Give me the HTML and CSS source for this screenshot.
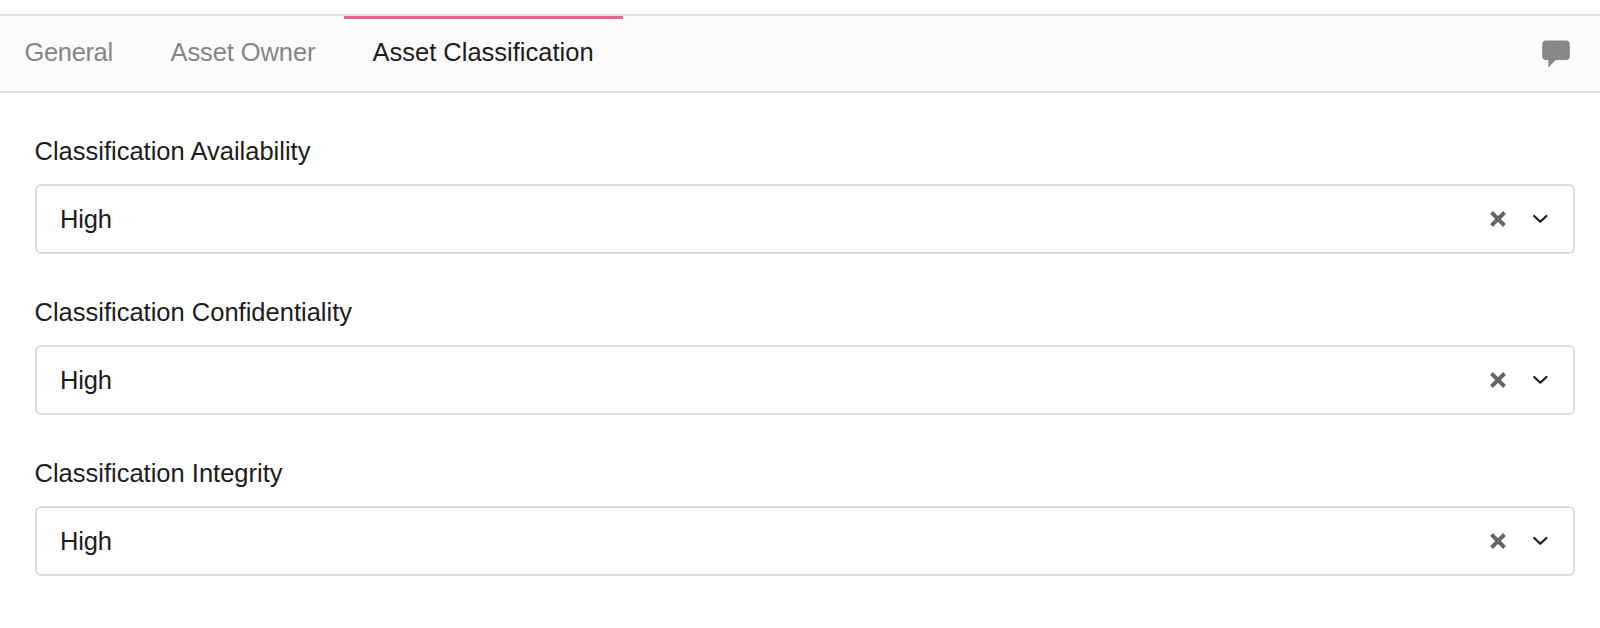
FILE: index.html
```html
<!DOCTYPE html>
<html lang="en">

<head>
  <meta charset="UTF-8">
  <meta name="viewport" content="width=device-width, initial-scale=1.0">
  <title>Asset Classification</title>
  <link rel="stylesheet" href="styles.css">
</head>

<body>
  <svg class="symbols" width="0" height="0">
    <symbol id="icon-clear" viewBox="0 0 18 18">
      <path d="M2.500 2.500l13 13M15.500 2.500l-13 13" fill="none" stroke="currentColor" stroke-width="4" />
    </symbol>
    <symbol id="icon-arrow" viewBox="0 0 16 10">
      <path d="M2.200 2L8.300 7.700 14.400 2" fill="none" stroke="currentColor" stroke-width="2.200" stroke-linecap="round" stroke-linejoin="round" />
    </symbol>
  </svg>

  <nav class="tabs">
    <a class="tab tab-general">General</a>
    <a class="tab tab-owner">Asset Owner</a>
    <a class="tab tab-class active">Asset Classification</a>
    <svg class="comment" width="28" height="28" viewBox="0 0 28 28">
      <path d="M4 .500h20a3.800 3.800 0 0 1 3.800 3.800v12a3.800 3.800 0 0 1-3.800 3.800H13.800L6.300 27.500V20H4A3.800 3.800 0 0 1 .200 16.200v-12A3.800 3.800 0 0 1 4 .500z" fill="currentColor" />
    </svg>
  </nav>

  <main class="fields">
    <div class="field">
      <label class="label">Classification Availability</label>
      <div class="select">
        <span class="value">High</span>
        <svg class="clear"><use href="#icon-clear" /></svg>
        <svg class="arrow"><use href="#icon-arrow" /></svg>
      </div>
    </div>
    <div class="field">
      <label class="label">Classification Confidentiality</label>
      <div class="select">
        <span class="value">High</span>
        <svg class="clear"><use href="#icon-clear" /></svg>
        <svg class="arrow"><use href="#icon-arrow" /></svg>
      </div>
    </div>
    <div class="field">
      <label class="label">Classification Integrity</label>
      <div class="select">
        <span class="value">High</span>
        <svg class="clear"><use href="#icon-clear" /></svg>
        <svg class="arrow"><use href="#icon-arrow" /></svg>
      </div>
    </div>
  </main>
</body>

</html>
```
FILE: styles.css
```css
* {
  box-sizing: border-box;
}

body {
  margin: 0;
  padding-top: 14px;
  background: #fff;
  color: #1c1c1c;
  font-family: "Liberation Sans", Arial, sans-serif;
  font-size: 25.5px;
  line-height: 30px;
}

.symbols {
  display: block;
}

.tabs {
  display: flex;
  height: 79px;
  border-top: 2px solid #e2e2e2;
  border-bottom: 2px solid #e0e0e0;
  background: #fbfbfb;
}

.tab {
  padding: 21px 0 0 28.5px;
  color: #868686;
  white-space: nowrap;
}

.tab-general {
  width: 142px;
  padding-left: 24.5px;
  letter-spacing: -0.35px;
}

.tab-owner {
  width: 202px;
  letter-spacing: -0.1px;
}

.tab-class {
  width: 279px;
}

.tab.active {
  padding-top: 18px;
  border-top: 3px solid #df6490;
  color: #1c1c1c;
}

.comment {
  margin: 24px 30px 0 auto;
  color: #888;
}

.fields {
  padding: 43px 25px 0 35px;
}

.field {
  height: 161px;
}

.label {
  display: block;
  height: 48px;
  margin-left: -0.5px;
}

.select {
  display: flex;
  align-items: center;
  height: 70px;
  padding: 0 25px 0 23px;
  border: 2px solid #dcdcdc;
  border-radius: 6px;
}

.value {
  flex: 1;
  letter-spacing: -0.2px;
}

.clear {
  width: 18px;
  height: 18px;
  margin-right: 25px;
  color: #666;
}

.arrow {
  width: 16px;
  height: 10px;
}
```
